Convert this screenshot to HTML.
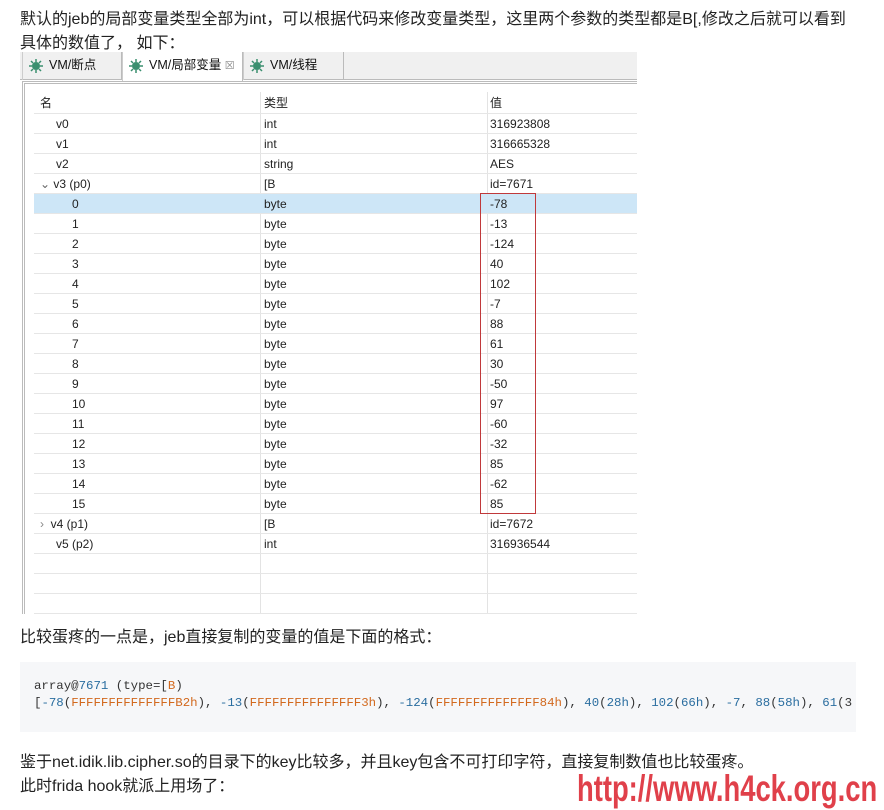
<!DOCTYPE html>
<html><head><meta charset="utf-8"><style>
*{margin:0;padding:0;box-sizing:border-box}
body{width:884px;height:806px;background:#fff;position:relative;overflow:hidden;font-family:"Liberation Sans","Noto Sans CJK SC",sans-serif;color:#222}
.t{position:absolute;left:20px;font-size:16px;white-space:nowrap}
.panel{position:absolute;left:20px;top:52px;width:617px;height:562px;background:#fff}
.tabs{position:absolute;left:0;top:0;width:617px;height:28px;background:#f0f0f0;border-bottom:1px solid #bbb}
.tab{position:absolute;top:0;height:28px;font-size:12.5px;line-height:27px;padding-left:26px;color:#111;border-right:1px solid #bbb;border-left:1px solid #ccc}
.tab svg{position:absolute;left:5px;top:6px}
.frame{position:absolute;left:2px;top:29px;width:615px;height:533px;border-left:3px double #bbb;border-top:3px double #bbb;background:#fff}
.row{position:absolute;left:14px;width:603px;height:20px;border-bottom:1px solid #e6e6e6;font-size:12px;line-height:20px;color:#222}
.row span{position:absolute}
.c1{left:6px}.c2{left:230px}.c3{left:456px}
.vl{position:absolute;top:40px;width:1px;height:493px;background:#e3e3e3}
.code{position:absolute;left:20px;top:662px;width:836px;height:70px;background:#f6f7f9;font-family:"Liberation Mono",monospace;font-size:12.4px;line-height:17px;padding:16px 0 0 14px;white-space:pre;overflow:hidden;color:#333}
.o{color:#d2691e}.b{color:#2b6ea0}
.wm{position:absolute;left:577px;top:768px;font-size:37px;font-weight:bold;color:#e0404a;transform:scaleX(0.74);transform-origin:left top;white-space:nowrap;font-family:"Liberation Sans",sans-serif}
</style></head><body>
<div class="t" style="top:5px">默认的jeb的局部变量类型全部为int，可以根据代码来修改变量类型，这里两个参数的类型都是B[,修改之后就可以看到</div>
<div class="t" style="top:29px">具体的数值了， 如下：</div>

<div class="panel">
 <div class="tabs">
  <div class="tab" style="left:2px;width:100px"><svg width="16" height="16" viewBox="0 0 16 16"><circle cx="8" cy="8" r="4" fill="#3a8f6f"/><path d="M8 1v3M8 12v3M1 8h3M12 8h3M3 3l2 2M11 11l2 2M13 3l-2 2M3 13l2-2" stroke="#3a8f6f" stroke-width="1.5"/></svg>VM/断点</div>
  <div class="tab" style="left:102px;width:121px;background:#fff;height:29px"><svg width="16" height="16" viewBox="0 0 16 16"><circle cx="8" cy="8" r="4" fill="#3a8f6f"/><path d="M8 1v3M8 12v3M1 8h3M12 8h3M3 3l2 2M11 11l2 2M13 3l-2 2M3 13l2-2" stroke="#3a8f6f" stroke-width="1.5"/></svg>VM/局部变量 <span style="color:#888;font-size:11px">☒</span></div>
  <div class="tab" style="left:223px;width:101px"><svg width="16" height="16" viewBox="0 0 16 16"><circle cx="8" cy="8" r="4" fill="#3a8f6f"/><path d="M8 1v3M8 12v3M1 8h3M12 8h3M3 3l2 2M11 11l2 2M13 3l-2 2M3 13l2-2" stroke="#3a8f6f" stroke-width="1.5"/></svg>VM/线程</div>
 </div>
 <div class="frame"></div>
</div>
<div style="position:absolute;left:0;top:0">
 <div class="vl" style="left:260px;top:92px;height:522px"></div>
 <div class="vl" style="left:487px;top:92px;height:522px"></div>
</div>
<div style="position:absolute;left:20px;top:92px">
 <div class="row" style="top:0;height:22px;line-height:22px"><span class="c1">名</span><span class="c2">类型</span><span class="c3">值</span></div>
 <div class="row" style="top:22px"><span class="c1" style="left:22px">v0</span><span class="c2">int</span><span class="c3">316923808</span></div>
 <div class="row" style="top:42px"><span class="c1" style="left:22px">v1</span><span class="c2">int</span><span class="c3">316665328</span></div>
 <div class="row" style="top:62px"><span class="c1" style="left:22px">v2</span><span class="c2">string</span><span class="c3">AES</span></div>
 <div class="row" style="top:82px"><span class="c1" style="left:6px"><span style="color:#666;position:static">⌄</span> v3 (p0)</span><span class="c2">[B</span><span class="c3">id=7671</span></div>
 <div class="row" style="top:102px;background:#cde6f7"><span class="c1" style="left:38px">0</span><span class="c2">byte</span><span class="c3">-78</span></div>
 <div class="row" style="top:122px"><span class="c1" style="left:38px">1</span><span class="c2">byte</span><span class="c3">-13</span></div>
 <div class="row" style="top:142px"><span class="c1" style="left:38px">2</span><span class="c2">byte</span><span class="c3">-124</span></div>
 <div class="row" style="top:162px"><span class="c1" style="left:38px">3</span><span class="c2">byte</span><span class="c3">40</span></div>
 <div class="row" style="top:182px"><span class="c1" style="left:38px">4</span><span class="c2">byte</span><span class="c3">102</span></div>
 <div class="row" style="top:202px"><span class="c1" style="left:38px">5</span><span class="c2">byte</span><span class="c3">-7</span></div>
 <div class="row" style="top:222px"><span class="c1" style="left:38px">6</span><span class="c2">byte</span><span class="c3">88</span></div>
 <div class="row" style="top:242px"><span class="c1" style="left:38px">7</span><span class="c2">byte</span><span class="c3">61</span></div>
 <div class="row" style="top:262px"><span class="c1" style="left:38px">8</span><span class="c2">byte</span><span class="c3">30</span></div>
 <div class="row" style="top:282px"><span class="c1" style="left:38px">9</span><span class="c2">byte</span><span class="c3">-50</span></div>
 <div class="row" style="top:302px"><span class="c1" style="left:38px">10</span><span class="c2">byte</span><span class="c3">97</span></div>
 <div class="row" style="top:322px"><span class="c1" style="left:38px">11</span><span class="c2">byte</span><span class="c3">-60</span></div>
 <div class="row" style="top:342px"><span class="c1" style="left:38px">12</span><span class="c2">byte</span><span class="c3">-32</span></div>
 <div class="row" style="top:362px"><span class="c1" style="left:38px">13</span><span class="c2">byte</span><span class="c3">85</span></div>
 <div class="row" style="top:382px"><span class="c1" style="left:38px">14</span><span class="c2">byte</span><span class="c3">-62</span></div>
 <div class="row" style="top:402px"><span class="c1" style="left:38px">15</span><span class="c2">byte</span><span class="c3">85</span></div>
 <div class="row" style="top:422px"><span class="c1" style="left:6px"><span style="color:#888;position:static">›</span>&nbsp; v4 (p1)</span><span class="c2">[B</span><span class="c3">id=7672</span></div>
 <div class="row" style="top:442px"><span class="c1" style="left:22px">v5 (p2)</span><span class="c2">int</span><span class="c3">316936544</span></div>
 <div class="row" style="top:462px"></div>
 <div class="row" style="top:482px"></div>
 <div class="row" style="top:502px"></div>
</div>
<div style="position:absolute;left:480px;top:193px;width:56px;height:321px;border:1px solid #c0393b"></div>

<div class="t" style="top:623px">比较蛋疼的一点是，jeb直接复制的变量的值是下面的格式：</div>
<div class="code">array@<span class="b">7671</span> (type=[<span class="o">B</span>)
[<span class="b">-78</span>(<span class="o">FFFFFFFFFFFFFFB2h</span>), <span class="b">-13</span>(<span class="o">FFFFFFFFFFFFFFF3h</span>), <span class="b">-124</span>(<span class="o">FFFFFFFFFFFFFF84h</span>), <span class="b">40</span>(<span class="b">28h</span>), <span class="b">102</span>(<span class="b">66h</span>), <span class="b">-7</span>, <span class="b">88</span>(<span class="b">58h</span>), <span class="b">61</span>(3</div>
<div class="t" style="top:748px">鉴于net.idik.lib.cipher.so的目录下的key比较多，并且key包含不可打印字符，直接复制数值也比较蛋疼。</div>
<div class="t" style="top:772px">此时frida hook就派上用场了：</div>
<div class="wm">http://www.h4ck.org.cn</div>
</body></html>
